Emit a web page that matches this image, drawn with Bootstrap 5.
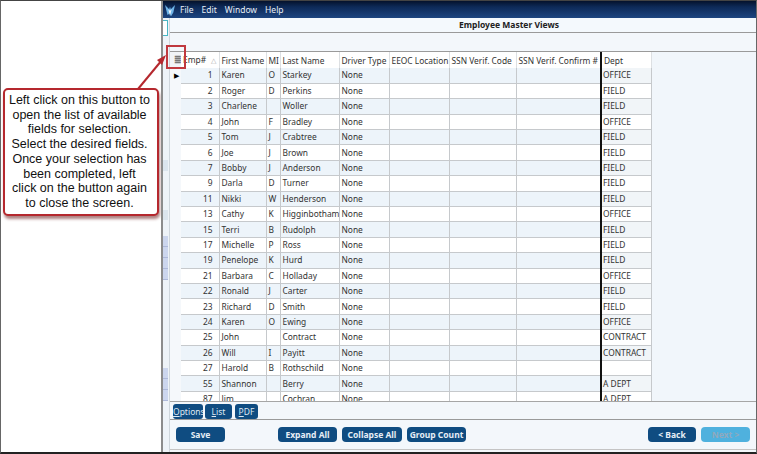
<!DOCTYPE html>
<html lang="en">
<head>
  <meta charset="UTF-8" />
  <meta name="viewport" content="width=device-width, initial-scale=1" />
  <title>Employee Master Views</title>
  <link href="https://cdn.jsdelivr.net/npm/bootstrap@5.3.3/dist/css/bootstrap.min.css" rel="stylesheet" />
  <style>
    html, body { height: 100%; }
    body { margin: 0; background: #fff; overflow: hidden; font-family: "Noto Sans", sans-serif; }
    .shot-frame { width: 757px; height: 454px; border-style: solid; border-width: 1px 1px 2px 1px; border-color: #444 #666 #222 #666; }
    .note-pane { width: 160px; flex: none; padding: 87px 0 0 2px; }
    .note-box { width: 156px; height: 128px; background: #fff; border: 2px solid #b5282e; border-radius: 5px; box-shadow: 1px 3px 3px rgba(110,30,30,.55); font: 12.5px/14.7px "Liberation Sans", sans-serif; color: #111; text-align: center; padding: 3px 3px 0 0; }
    .note-arrow { position: absolute; left: 130px; top: 50px; }
    .hit-box { position: absolute; left: 165px; top: 44px; width: 20px; height: 24px; border: 2px solid #c0393f; }
    .app-pane { border-left: 2px solid #8c8c8c; min-width: 0; }
    .side-strip { width: 7px; flex: none; background: #eef3f8; border-right: 1px solid #cfd6dc; }
    .strip-input { height: 16px; width: 5px; margin-top: 2px; background: #fff; border: 1px solid #49b6c4; border-left: 0; }
    .strip-tab { width: 5px; height: 11px; background: #ccd6ee; border-bottom: 1px solid #aeb9da; }
    .strip-pale { width: 5px; background: #dbe5ee; }
    .strip-a { margin-top: 124px; height: 11px; }
    .strip-b { margin-top: 39px; height: 10px; }
    .strip-c { margin-top: 16px; }
    .strip-d { margin-top: 88px; }
    .app-bar { height: 17px; background: linear-gradient(#04122c, #0d2a58 35%, #1d4580); color: #e8eef6; font-size: 8.5px; line-height: 16px; }
    .app-logo { width: 10px; margin: 2px 5px 0 2px; flex: none; }
    .app-bar span { margin-right: 8px; }
    .view-title { height: 15px; background: #f4f9fd; border-bottom: 1px solid #9a9a9a; font-size: 8.5px; font-weight: 700; line-height: 14px; color: #222; text-align: center; padding-left: 92px; }
    .tool-row { height: 19px; background: #f3f7fb; border-bottom: 1px solid #9a9a9a; }
    .grid-wrap { height: 350px; overflow: hidden; background: #f1f6fb; border-bottom: 1px solid #a6a6a6; }
    .emp-grid { table-layout: fixed; width: 481px; border-collapse: collapse; font-size: 8.4px; color: #333; }
    .emp-grid col:nth-child(1) { width: 11px; }
    .emp-grid col:nth-child(2) { width: 38px; }
    .emp-grid col:nth-child(3) { width: 47px; }
    .emp-grid col:nth-child(4) { width: 14px; }
    .emp-grid col:nth-child(5) { width: 59px; }
    .emp-grid col:nth-child(6) { width: 50px; }
    .emp-grid col:nth-child(7) { width: 60px; }
    .emp-grid col:nth-child(8) { width: 67px; }
    .emp-grid col:nth-child(9) { width: 85px; }
    .emp-grid col:nth-child(10) { width: 50px; }
    .emp-grid td, .emp-grid th { height: 15.4px; padding: 0 0 0 2px; font-weight: 400; white-space: nowrap; overflow: hidden; line-height: 13px; border-right: 1px solid #c6c9cc; border-bottom: 1px solid #c6c9cc; }
    .emp-grid td { padding: 0 0 1px 2px; }
    .emp-grid th { background: #fff; height: 16px; border-bottom: 0; border-right: 1px solid #dde0e3; }
    .emp-grid tbody tr:nth-child(odd) td { background: #edf4fa; }
    .emp-grid tbody tr:nth-child(even) td { background: #fff; }
    .emp-grid .row-mark, .emp-grid tbody tr td.row-mark { background: #f5f8fb; border: 0; padding: 0 0 1px 4px; font-size: 7px; color: #000; }
    .emp-grid th.row-mark { background: #f1f4f7; color: #777; font-size: 9px; font-weight: 700; }
    .emp-grid td.emp-no { text-align: right; padding-right: 6px; }
    .emp-grid .sort-tri { color: #aaa; font-size: 7px; margin-left: 5px; }
    .emp-grid th.dept-col, .emp-grid td.dept-col { border-left: 2px solid #111; }
    .emp-grid td.dept-col { padding-left: 1px; }
    .emp-grid tbody tr:nth-child(odd) td.dept-col { background: #f1f5f8; }
    .tab-row { height: 18px; background: #f3f7fb; border-bottom: 1px solid #9a9a9a; padding: 2px 0 0 3px; gap: 2px; }
    .tab-btn { height: 15px; background: #0f4c81; color: #dfe9f3; border-radius: 3px; font-size: 8.5px; line-height: 15px; text-align: center; overflow: hidden; }
    .tab-options { width: 30px; }
    .tab-list { width: 27px; }
    .tab-pdf { width: 23px; margin-left: 1px; }
    .action-row { height: 29px; background: #f3f7fb; padding: 7px 6px 0 6px; }
    .act-btn { height: 15px; padding: 0; border: 0; border-radius: 4px; background: #0f4c81; color: #e6eef6; font-size: 8.5px; font-weight: 700; line-height: 15px; }
    .act-btn:disabled { background: #4fb1de; color: #8fa9bd; opacity: 1; }
    .btn-save { width: 49px; }
    .btn-expand { width: 59px; margin-left: 53px; }
    .btn-collapse { width: 60px; margin-left: 5px; }
    .btn-group-count { width: 59px; margin-left: 5px; }
    .btn-back { width: 48px; }
    .btn-next { width: 49px; margin-left: 5px; }
    .foot-row { flex: 1; background: #f3f7fb; border-top: 1px solid #c4c4c4; }
  </style>
</head>
<body>
  <div class="shot-frame d-flex position-relative">
    <div class="note-pane">
      <div class="note-box">Left click on this button to<br>open the list of available<br>fields for selection.<br>Select the desired fields.<br>Once your selection has<br>been completed, left<br>click on the button again<br>to close the screen.</div>
    </div>
    <div class="app-pane flex-grow-1 d-flex flex-column">
      <div class="app-bar d-flex align-items-center">
        <svg class="app-logo" viewBox="0 0 12 14"><path d="M0 0l5 5 1-3 1 3 5-5-2 9-3 5-1-4-3 2z" fill="#6fb4e8"/><path d="M4 5l2 8 2-8-2 2z" fill="#eef6fc"/></svg>
        <span>File</span><span>Edit</span><span>Window</span><span>Help</span>
      </div>
      <div class="d-flex flex-grow-1">
        <div class="side-strip">
          <div class="strip-input"></div>
          <div class="strip-pale strip-a"></div>
          <div class="strip-pale strip-b"></div>
          <div class="strip-tab strip-c"></div><div class="strip-tab"></div><div class="strip-tab"></div><div class="strip-tab"></div>
          <div class="strip-tab strip-d"></div><div class="strip-tab"></div><div class="strip-tab"></div>
        </div>
        <div class="flex-grow-1 d-flex flex-column">
          <div class="view-title">Employee Master Views</div>
          <div class="tool-row"></div>
          <div class="grid-wrap">
            <table class="emp-grid" id="empGrid">
              <colgroup><col><col><col><col><col><col><col><col><col><col></colgroup>
              <thead>
                <tr>
                  <th class="row-mark">≣</th>
                  <th>Emp#<span class="sort-tri">△</span></th>
                  <th>First Name</th><th>MI</th><th>Last Name</th><th>Driver Type</th><th>EEOC Location</th><th>SSN Verif. Code</th><th>SSN Verif. Confirm #</th><th class="dept-col">Dept</th>
                </tr>
              </thead>
              <tbody></tbody>
            </table>
          </div>
          <div class="tab-row d-flex">
            <div class="tab-btn tab-options"><u>O</u>ptions</div>
            <div class="tab-btn tab-list"><u>L</u>ist</div>
            <div class="tab-btn tab-pdf"><u>P</u>DF</div>
          </div>
          <div class="action-row d-flex">
            <button class="btn act-btn btn-save">Save</button>
            <button class="btn act-btn btn-expand">Expand All</button>
            <button class="btn act-btn btn-collapse">Collapse All</button>
            <button class="btn act-btn btn-group-count">Group Count</button>
            <button class="btn act-btn btn-back ms-auto">&lt; Back</button>
            <button class="btn act-btn btn-next" disabled>Next &gt;</button>
          </div>
          <div class="foot-row"></div>
        </div>
      </div>
    </div>
    <svg class="note-arrow" width="40" height="50" viewBox="0 0 40 50"><path d="M7 38L31 9" stroke="#b5282e" stroke-width="2" fill="none"/><path d="M35 4l-9 5 5 5z" fill="#b5282e"/></svg>
    <div class="hit-box"></div>
  </div>
  <script src="https://cdn.jsdelivr.net/npm/bootstrap@5.3.3/dist/js/bootstrap.bundle.min.js"></script>
  <script>
    // rows of the grid: no, first, mi, last, dept
    const rows = [
      [1,'Karen','O','Starkey','OFFICE'],[2,'Roger','D','Perkins','FIELD'],[3,'Charlene','','Woller','FIELD'],
      [4,'John','F','Bradley','OFFICE'],[5,'Tom','J','Crabtree','FIELD'],[6,'Joe','J','Brown','FIELD'],
      [7,'Bobby','J','Anderson','FIELD'],[9,'Darla','D','Turner','FIELD'],[11,'Nikki','W','Henderson','FIELD'],
      [13,'Cathy','K','Higginbotham','OFFICE'],[15,'Terri','B','Rudolph','FIELD'],[17,'Michelle','P','Ross','FIELD'],
      [19,'Penelope','K','Hurd','FIELD'],[21,'Barbara','C','Holladay','OFFICE'],[22,'Ronald','J','Carter','FIELD'],
      [23,'Richard','D','Smith','FIELD'],[24,'Karen','O','Ewing','OFFICE'],[25,'John','','Contract','CONTRACT'],
      [26,'Will','I','Payitt','CONTRACT'],[27,'Harold','B','Rothschild',''],[55,'Shannon','','Berry','A DEPT'],
      [87,'Jim','','Cochran','A DEPT']
    ];
    document.querySelector('#empGrid tbody').innerHTML = rows.map((r, i) => `
      <tr>
        <td class="row-mark">${i === 0 ? '▶' : ''}</td>
        <td class="emp-no">${r[0]}</td><td>${r[1]}</td><td>${r[2]}</td><td>${r[3]}</td><td>None</td><td></td><td></td><td></td>
        <td class="dept-col">${r[4]}</td>
      </tr>`).join('');
  </script>
</body>
</html>
